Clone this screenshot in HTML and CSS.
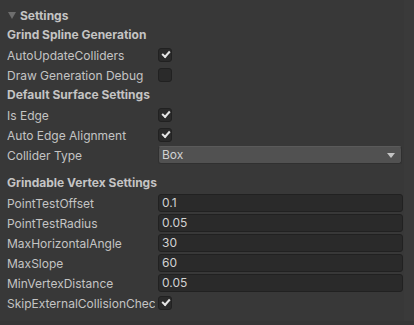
FILE: index.html
```html
<!DOCTYPE html>
<html lang="en">
<head>
  <meta charset="UTF-8">
  <meta name="viewport" content="width=device-width, initial-scale=1.0">
  <title>Settings</title>
  <link rel="stylesheet" href="styles.css">
</head>
<body>
  <div class="inspector">
    <div class="foldout">
      <span class="arrow"></span>
      <span>Settings</span>
    </div>

    <div class="header">Grind Spline Generation</div>
    <div class="row">
      <span class="label">AutoUpdateColliders</span>
      <span class="check on"></span>
    </div>
    <div class="row">
      <span class="label">Draw Generation Debug</span>
      <span class="check"></span>
    </div>

    <div class="header">Default Surface Settings</div>
    <div class="row">
      <span class="label">Is Edge</span>
      <span class="check on"></span>
    </div>
    <div class="row">
      <span class="label">Auto Edge Alignment</span>
      <span class="check on"></span>
    </div>
    <div class="row">
      <span class="label">Collider Type</span>
      <div class="dropdown">Box<span class="caret"></span></div>
    </div>

    <div class="header spaced">Grindable Vertex Settings</div>
    <div class="row">
      <span class="label">PointTestOffset</span>
      <div class="field">0.1</div>
    </div>
    <div class="row">
      <span class="label">PointTestRadius</span>
      <div class="field">0.05</div>
    </div>
    <div class="row">
      <span class="label">MaxHorizontalAngle</span>
      <div class="field">30</div>
    </div>
    <div class="row">
      <span class="label">MaxSlope</span>
      <div class="field">60</div>
    </div>
    <div class="row">
      <span class="label">MinVertexDistance</span>
      <div class="field">0.05</div>
    </div>
    <div class="row">
      <span class="label">SkipExternalCollisionChec</span>
      <span class="check on"></span>
    </div>
  </div>
</body>
</html>
```

FILE: styles.css
```css
body {
  margin: 0;
  background-color: #363636;
  font-family: Inter, "Noto Sans", sans-serif;
  font-size: 12px;
  color: #c4c4c4;
  height: 325px;
  overflow: hidden;
}
.inspector {
  width: 404px;
  padding: 6px 0 7px 0;
  background-color: #383838;
  border-right: 10px solid #3a3a3a;
}
.foldout {
  display: flex;
  align-items: center;
  height: 18px;
  padding-left: 8px;
  font-weight: 700;
  margin-bottom: 2px;
}
.arrow {
  width: 0;
  height: 0;
  border-left: 4px solid transparent;
  border-right: 4px solid transparent;
  border-top: 7px solid #6e6e6e;
  margin-right: 4px;
}
.header {
  height: 18px;
  line-height: 18px;
  padding-left: 7px;
  font-weight: 700;
  margin-bottom: 2px;
}
.header.spaced {
  margin-top: 10px;
}
.row {
  display: flex;
  align-items: center;
  height: 18px;
  margin-bottom: 2px;
  padding-left: 7px;
}
.label {
  width: 148px;
  flex-shrink: 0;
  white-space: nowrap;
  overflow: hidden;
  margin-right: 3px;
}
.check {
  width: 12px;
  height: 12px;
  background-color: #2a2a2a;
  border: 1px solid #212121;
  border-radius: 3px;
  position: relative;
}
.check.on::after {
  content: "";
  position: absolute;
  left: 3px;
  top: 2px;
  width: 6px;
  height: 3px;
  border-left: 2px solid #e4e4e4;
  border-bottom: 2px solid #e4e4e4;
  transform: rotate(-48deg);
}
.dropdown {
  flex: 1;
  height: 16px;
  line-height: 16px;
  margin-right: 2px;
  padding-left: 3px;
  background-color: #515151;
  border: 1px solid #303030;
  border-top-color: #5a5a5a;
  border-radius: 3px;
  color: #d2d2d2;
  position: relative;
}
.caret {
  position: absolute;
  right: 6px;
  top: 6px;
  width: 0;
  height: 0;
  border-left: 4px solid transparent;
  border-right: 4px solid transparent;
  border-top: 5px solid #c4c4c4;
}
.field {
  flex: 1;
  height: 16px;
  line-height: 16px;
  margin-right: 1px;
  padding-left: 3px;
  background-color: #2a2a2a;
  border: 1px solid #212121;
  border-radius: 3px;
  color: #d2d2d2;
}
```
